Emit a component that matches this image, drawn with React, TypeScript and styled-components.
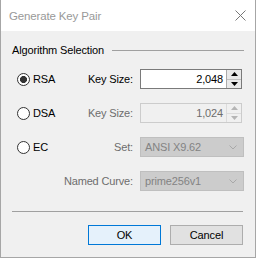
import React from "react";
import styled, { createGlobalStyle } from "styled-components";

const Global = createGlobalStyle`
  html, body { margin: 0; padding: 0; background: #f0f0f0; }
  body {
    font-family: "Segoe UI", "Liberation Sans", Arial, sans-serif;
    font-size: 11px;
    letter-spacing: -0.15px;
    color: #000;
  }
`;

const Window = styled.div`
  width: 256px;
  height: 258px;
  box-sizing: border-box;
  border: 1px solid #a6a6a6;
  border-top: none;
  display: flex;
  flex-direction: column;
  background: #f0f0f0;
`;

const TitleBar = styled.div`
  height: 31px;
  flex: none;
  background: #fff;
  display: flex;
  align-items: center;
  justify-content: space-between;
  padding: 0 9px 0 8px;
`;

const Title = styled.span`
  color: #999;
  font-size: 11.5px;
`;

const Body = styled.div`
  flex: 1;
  display: flex;
  flex-direction: column;
  padding: 11px 11px 0 11px;
`;

const GroupHeader = styled.div`
  height: 16px;
  display: flex;
  align-items: center;
  gap: 8px;
`;

const Rule = styled.div`
  flex: 1;
  height: 1px;
  background: #a0a0a0;
`;

const Grid = styled.div`
  margin-top: 11px;
  padding-left: 5px;
  display: grid;
  grid-template-columns: 43px 66px 104px;
  grid-auto-rows: 20px;
  column-gap: 7px;
  row-gap: 14px;
  align-items: center;
`;

const Radio = styled.label<{ $checked?: boolean }>`
  display: flex;
  align-items: center;
  gap: 3px;
  color: #000;
  &::before {
    content: "";
    box-sizing: border-box;
    width: 13px;
    height: 13px;
    border-radius: 50%;
    border: 1px solid #333;
    background: ${(p) =>
      p.$checked
        ? "radial-gradient(circle, #333 0 3.2px, #fff 3.8px)"
        : "#fff"};
  }
`;

const FieldLabel = styled.span<{ $disabled?: boolean; $wide?: boolean }>`
  text-align: right;
  white-space: nowrap;
  color: ${(p) => (p.$disabled ? "#6d6d6d" : "#000")};
  grid-column: ${(p) => (p.$wide ? "1 / 3" : "auto")};
`;

const Spin = styled.div<{ $disabled?: boolean }>`
  box-sizing: border-box;
  height: 20px;
  width: 102px;
  display: flex;
  border: 1px solid ${(p) => (p.$disabled ? "#cccccc" : "#7a7a7a")};
  background: ${(p) => (p.$disabled ? "#f0f0f0" : "#fff")};
`;

const SpinValue = styled.div<{ $disabled?: boolean }>`
  flex: 1;
  text-align: right;
  padding-right: 3px;
  line-height: 18px;
  color: ${(p) => (p.$disabled ? "#6d6d6d" : "#000")};
`;

const SpinButtons = styled.div<{ $disabled?: boolean }>`
  width: 14px;
  display: flex;
  flex-direction: column;
  border-left: 1px solid ${(p) => (p.$disabled ? "#dcdcdc" : "#ababab")};
`;

const SpinBtn = styled.div<{ $down?: boolean; $disabled?: boolean }>`
  flex: 1;
  display: flex;
  align-items: center;
  justify-content: center;
  background: ${(p) => (p.$disabled ? "#f0f0f0" : "#e9e9e9")};
  border-top: ${(p) => (p.$down ? `1px solid ${p.$disabled ? "#dcdcdc" : "#c0c0c0"}` : "none")};
`;

const Select = styled.div`
  box-sizing: border-box;
  height: 20px;
  width: 104px;
  display: flex;
  align-items: center;
  justify-content: space-between;
  padding: 0 6px 0 4px;
  background: #cccccc;
  border: 1px solid #bfbfbf;
  color: #838383;
`;

const Separator = styled.div`
  margin-top: 20px;
  height: 1px;
  margin-right: 1px;
  background: #a0a0a0;
`;

const Buttons = styled.div`
  margin-top: 13px;
  display: flex;
  justify-content: flex-end;
  gap: 9px;
  padding-right: 1px;
`;

const Button = styled.div<{ $primary?: boolean }>`
  box-sizing: border-box;
  width: 73px;
  height: 20px;
  display: flex;
  align-items: center;
  justify-content: center;
  background: ${(p) => (p.$primary ? "#e5f1fb" : "#e1e1e1")};
  border: 1px solid ${(p) => (p.$primary ? "#0078d7" : "#adadad")};
  color: #000;
`;

const Up = ({ c }: { c: string }) => (
  <svg width="7" height="4" viewBox="0 0 7 4"><path d="M3.5 0 L7 4 L0 4 Z" fill={c} /></svg>
);
const Down = ({ c }: { c: string }) => (
  <svg width="7" height="4" viewBox="0 0 7 4"><path d="M0 0 L7 0 L3.5 4 Z" fill={c} /></svg>
);
const Chevron = () => (
  <svg width="8" height="5" viewBox="0 0 8 5"><path d="M0.5 0.5 L4 4 L7.5 0.5" stroke="#a8a8a8" fill="none" /></svg>
);

const Spinner = ({ value, disabled }: { value: string; disabled?: boolean }) => (
  <Spin $disabled={disabled}>
    <SpinValue $disabled={disabled}>{value}</SpinValue>
    <SpinButtons $disabled={disabled}>
      <SpinBtn $disabled={disabled}><Up c={disabled ? "#b5b5b5" : "#000"} /></SpinBtn>
      <SpinBtn $down $disabled={disabled}><Down c={disabled ? "#b5b5b5" : "#000"} /></SpinBtn>
    </SpinButtons>
  </Spin>
);

export default function App() {
  return (
    <>
      <Global />
      <Window>
        <TitleBar>
          <Title>Generate Key Pair</Title>
          <svg width="11" height="11" viewBox="0 0 11 11">
            <path d="M0.5 0.5 L10.5 10.5 M10.5 0.5 L0.5 10.5" stroke="#777" strokeWidth="1" />
          </svg>
        </TitleBar>
        <Body>
          <GroupHeader>
            <span>Algorithm Selection</span>
            <Rule />
          </GroupHeader>
          <Grid>
            <Radio $checked>RSA</Radio>
            <FieldLabel>Key Size:</FieldLabel>
            <Spinner value="2,048" />

            <Radio>DSA</Radio>
            <FieldLabel $disabled>Key Size:</FieldLabel>
            <Spinner value="1,024" disabled />

            <Radio>EC</Radio>
            <FieldLabel $disabled>Set:</FieldLabel>
            <Select><span>ANSI X9.62</span><Chevron /></Select>

            <FieldLabel $disabled $wide>Named Curve:</FieldLabel>
            <Select><span>prime256v1</span><Chevron /></Select>
          </Grid>
          <Separator />
          <Buttons>
            <Button $primary>OK</Button>
            <Button>Cancel</Button>
          </Buttons>
        </Body>
      </Window>
    </>
  );
}
